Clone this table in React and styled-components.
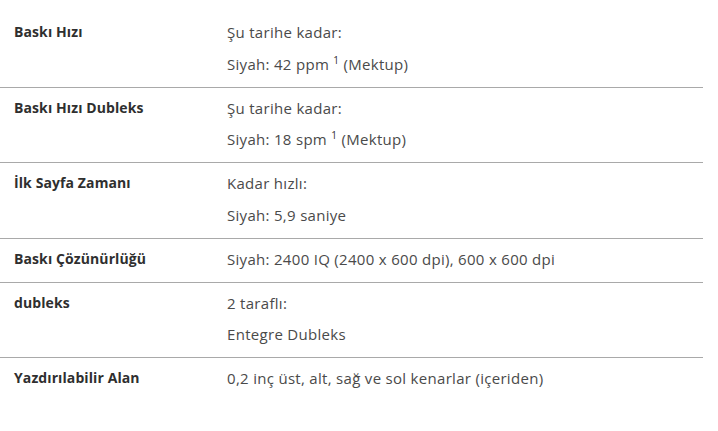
import React from 'react';
import styled, { createGlobalStyle } from 'styled-components';

const GlobalStyle = createGlobalStyle`
  body {
    margin: 0;
    background: #ffffff;
    font-family: "Open Sans", "Noto Sans", Arial, sans-serif;
  }
`;

const SpecTable = styled.div`
  width: 703px;
  padding-top: 12px;
`;

const SpecRow = styled.div`
  display: grid;
  grid-template-columns: 213px 1fr;
  align-items: start;
  padding: 10px 0 13px 14px;
  border-bottom: ${props => (props.last ? 'none' : '1px solid #a9a9a9')};
`;

const Label = styled.div`
  font-size: 14px;
  line-height: 20px;
  height: 20px;
  font-weight: 700;
  letter-spacing: 0.1px;
  color: #2f2f2f;
`;

const Values = styled.div`
  display: flex;
  flex-direction: column;
  gap: 11.5px;
`;

const Value = styled.div`
  font-size: 15px;
  line-height: 20px;
  height: 20px;
  letter-spacing: 0.3px;
  color: #4a4a4a;
  white-space: nowrap;
`;

const Sup = styled.span`
  font-size: 10px;
  position: relative;
  top: -6px;
  color: #333;
`;

const specs = [
  { label: 'Baskı Hızı', values: ['Şu tarihe kadar:', <>Siyah: 42 ppm <Sup>1</Sup> (Mektup)</>] },
  { label: 'Baskı Hızı Dubleks', values: ['Şu tarihe kadar:', <>Siyah: 18 spm <Sup>1</Sup> (Mektup)</>] },
  { label: 'İlk Sayfa Zamanı', values: ['Kadar hızlı:', 'Siyah: 5,9 saniye'] },
  { label: 'Baskı Çözünürlüğü', values: ['Siyah: 2400 IQ (2400 x 600 dpi), 600 x 600 dpi'] },
  { label: 'dubleks', values: ['2 taraflı:', 'Entegre Dubleks'] },
  { label: 'Yazdırılabilir Alan', values: ['0,2 inç üst, alt, sağ ve sol kenarlar (içeriden)'] },
];

const App = () => {
  return (
    <>
      <GlobalStyle />
      <SpecTable>
        {specs.map((spec, i) => (
          <SpecRow key={spec.label} last={i === specs.length - 1}>
            <Label>{spec.label}</Label>
            <Values>
              {spec.values.map((v, j) => (
                <Value key={j}>{v}</Value>
              ))}
            </Values>
          </SpecRow>
        ))}
      </SpecTable>
    </>
  );
};

export default App;
